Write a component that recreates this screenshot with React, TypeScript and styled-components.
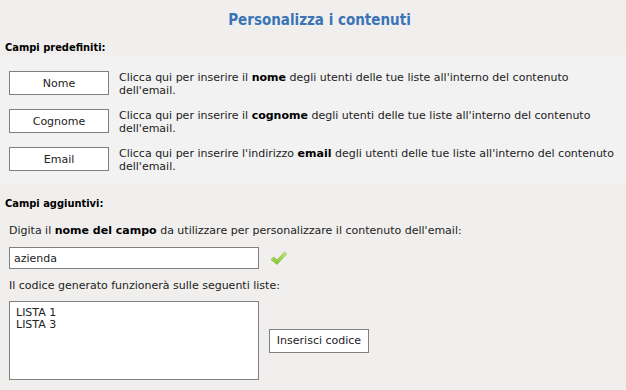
import { FC } from "react";
import styled, { createGlobalStyle } from "styled-components";

const GlobalStyle = createGlobalStyle`
  html, body {
    margin: 0;
    padding: 0;
    background: #f0efed;
  }
  body {
    font-family: "DejaVu Sans", Verdana, sans-serif;
    font-size: 11px;
    color: #222;
  }
`;

const Page = styled.div`
  width: 626px;
  height: 390px;
  overflow: hidden;
  display: flex;
  flex-direction: column;
`;

const Title = styled.h1`
  margin: 0;
  padding: 11px 0 0 13px;
  height: 28px;
  text-align: center;
  font-family: "DejaVu Sans Condensed", Tahoma, sans-serif;
  font-size: 15px;
  font-weight: bold;
  color: #3a74b6;
`;

const SectionLabel = styled.div<{ $top?: number }>`
  margin-top: ${({ $top }) => $top ?? 0}px;
  padding: 2px 5px 0;
  height: 14px;
  font-family: "DejaVu Sans Condensed", Tahoma, sans-serif;
  font-weight: bold;
  color: #000;
`;

const FieldList = styled.div`
  background: #f2f2f2;
  padding: 16px 9px 10px;
  display: flex;
  flex-direction: column;
  gap: 12px;
`;

const FieldRow = styled.div`
  display: flex;
  align-items: flex-start;
  gap: 10px;
`;

const Button = styled.button`
  flex: none;
  width: 100px;
  height: 24px;
  padding: 0;
  background: #fff;
  border: 1px solid #7f7f7f;
  font-family: "DejaVu Sans", Verdana, sans-serif;
  font-size: 11px;
  color: #222;
  cursor: pointer;
`;

const Description = styled.p`
  margin: 0;
  line-height: 13px;
  b {
    font-weight: bold;
    color: #000;
  }
`;

const Extra = styled.div`
  padding: 0 9px;
  display: flex;
  flex-direction: column;
`;

const Hint = styled.p<{ $top?: number }>`
  margin: ${({ $top }) => $top ?? 0}px 0 0;
  line-height: 13px;
  b {
    color: #000;
  }
`;

const InputRow = styled.div`
  display: flex;
  align-items: center;
  gap: 11px;
  margin: 10px 0 10px;
`;

const TextInput = styled.input`
  box-sizing: border-box;
  width: 250px;
  height: 22px;
  padding: 0 4px;
  border: 1px solid #7f7f7f;
  background: #fff;
  font-family: "DejaVu Sans", Verdana, sans-serif;
  font-size: 11px;
  color: #222;
  outline: none;
`;

const CodeRow = styled.div`
  display: flex;
  align-items: center;
  gap: 10px;
  margin-top: 9px;
`;

const ListBox = styled.div`
  box-sizing: border-box;
  width: 250px;
  height: 79px;
  padding: 5px 6px;
  border: 1px solid #7f7f7f;
  background: #fff;
  line-height: 12px;
  color: #222;
`;

const Check: FC = () => (
  <svg width="17" height="15" viewBox="0 0 17 15">
    <defs>
      <linearGradient id="chk" x1="0" y1="0" x2="0" y2="1">
        <stop offset="0" stopColor="#c8ec7a" />
        <stop offset="1" stopColor="#7fbf2a" />
      </linearGradient>
    </defs>
    <path
      d="M1 8.5 L4 6 L7 9 L14.5 1 L16.5 3 L7 13.5 Z"
      fill="url(#chk)"
      stroke="#8cbf4a"
      strokeWidth="0.8"
      strokeLinejoin="round"
    />
  </svg>
);

const fields = [
  { label: "Nome", pre: "Clicca qui per inserire il ", key: "nome" },
  { label: "Cognome", pre: "Clicca qui per inserire il ", key: "cognome" },
  { label: "Email", pre: "Clicca qui per inserire l'indirizzo ", key: "email" },
];

export default function App() {
  return (
    <Page>
      <GlobalStyle />
      <Title>Personalizza i contenuti</Title>
      <SectionLabel>Campi predefiniti:</SectionLabel>
      <FieldList>
        {fields.map((f) => (
          <FieldRow key={f.label}>
            <Button>{f.label}</Button>
            <Description>
              {f.pre}
              <b>{f.key}</b> degli utenti delle tue liste all'interno del contenuto
              dell'email.
            </Description>
          </FieldRow>
        ))}
      </FieldList>
      <SectionLabel $top={12}>Campi aggiuntivi:</SectionLabel>
      <Extra>
        <Hint $top={13}>
          Digita il <b>nome del campo</b> da utilizzare per personalizzare il
          contenuto dell'email:
        </Hint>
        <InputRow>
          <TextInput defaultValue="azienda" />
          <Check />
        </InputRow>
        <Hint>Il codice generato funzionerà sulle seguenti liste:</Hint>
        <CodeRow>
          <ListBox>
            LISTA 1
            <br />
            LISTA 3
          </ListBox>
          <Button>Inserisci codice</Button>
        </CodeRow>
      </Extra>
    </Page>
  );
}
